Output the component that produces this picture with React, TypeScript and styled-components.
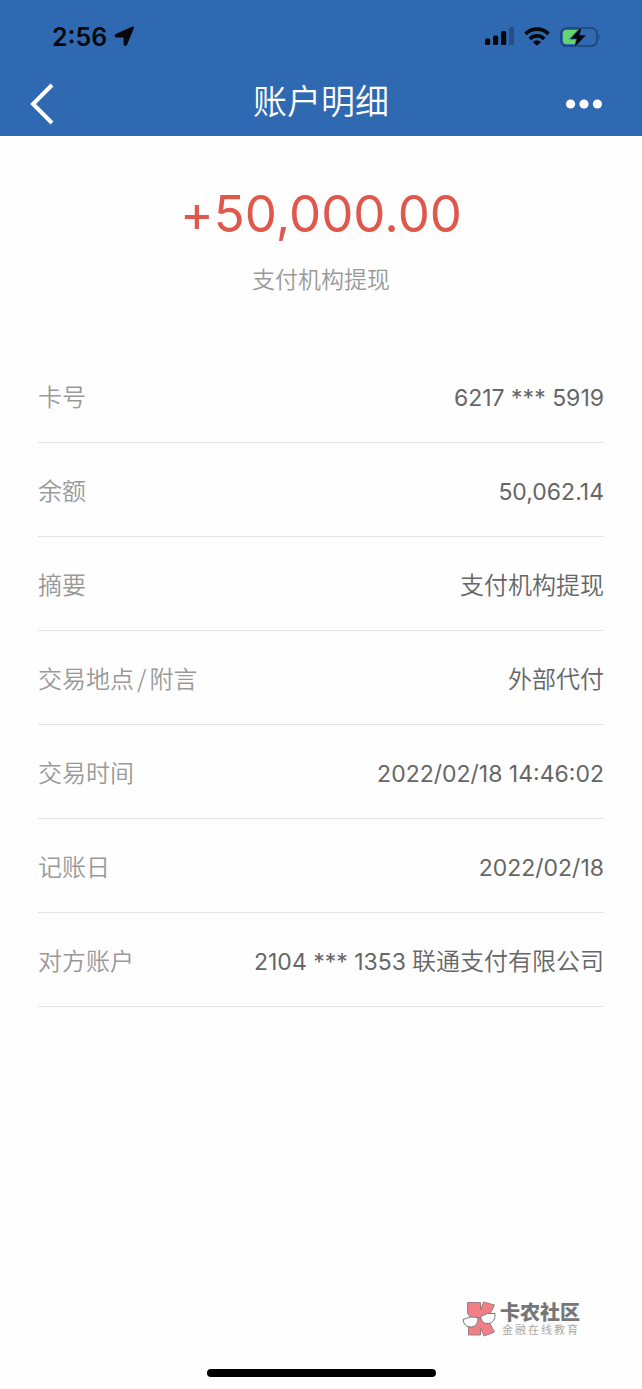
import React from "react";
import styled, { createGlobalStyle } from "styled-components";

const GlobalStyle = createGlobalStyle`
  * { box-sizing: border-box; }
  body {
    margin: 0;
    background: #fefefe;
    font-family: Inter, "Noto Sans CJK SC", sans-serif;
  }
`;

const Page = styled.div`
  min-height: 100vh;
  display: flex;
  flex-direction: column;
`;

const Header = styled.header`
  background: #2f69b1;
  padding-bottom: 1px;
`;

const StatusBar = styled.div`
  height: 73px;
  padding: 0 41px 0 52px;
  display: flex;
  align-items: center;
  justify-content: space-between;
  color: #06080d;
`;

const Clock = styled.div`
  display: flex;
  align-items: center;
  gap: 7px;
  font-size: 25px;
  font-weight: 600;
  line-height: 32px;
`;

const StatusIcons = styled.div`
  display: flex;
  align-items: center;
  gap: 10px;
`;

const NavBar = styled.nav`
  height: 62px;
  padding: 0 30px;
  display: grid;
  grid-template-columns: 48px 1fr 48px;
  align-items: center;
`;

const IconButton = styled.button<{ $end?: boolean }>`
  height: 48px;
  padding: 0 ${(p) => (p.$end ? "10px" : "0")} 0 0;
  border: 0;
  background: none;
  color: #fff;
  display: flex;
  align-items: center;
  justify-content: ${(p) => (p.$end ? "flex-end" : "flex-start")};
`;

const Title = styled.h1`
  margin: 0;
  color: #fff;
  font-size: 34px;
  font-weight: 350;
  line-height: 48px;
  padding-bottom: 4px;
  text-align: center;
`;

const Summary = styled.section`
  padding: 44px 38px 52px;
  text-align: center;
`;

const Amount = styled.div`
  color: #e0574c;
  font-size: 51px;
  font-feature-settings: "calt" 0;
  line-height: 68px;
`;

const Caption = styled.div`
  margin-top: 15px;
  color: #999;
  font-size: 23px;
  font-weight: 350;
  line-height: 34px;
`;

const Details = styled.dl`
  margin: 0 38px;
`;

const Row = styled.div`
  min-height: 94px;
  padding: 29px 0 20px;
  display: flex;
  align-items: baseline;
  justify-content: space-between;
  border-bottom: 1px solid #e4e4e4;
  font-size: 24px;
  line-height: 36px;
`;

const Term = styled.dt`
  color: #999;
  font-family: "Noto Sans CJK SC", sans-serif;
  font-weight: 350;
`;

const Slash = styled.span`
  margin: 0 3px;
`;

const Value = styled.dd`
  margin: 0;
  display: flex;
  align-items: baseline;
  gap: 6px;
  color: #666;
  font-weight: 350;
`;

const Digits = styled.span`
  font-size: 23px;
  font-weight: 400;
`;

const Footer = styled.footer`
  margin-top: auto;
  padding-bottom: 12px;
`;

const Brand = styled.div`
  display: flex;
  align-items: center;
  justify-content: flex-end;
  gap: 4px;
  padding-right: 62px;
  margin-bottom: 32px;
`;

const BrandText = styled.div`
  padding-top: 3px;
`;

const BrandName = styled.div`
  color: #777;
  font-size: 20px;
  font-weight: 900;
  line-height: 20px;
`;

const BrandTag = styled.div`
  color: #aaa;
  font-size: 11px;
  line-height: 14px;
  letter-spacing: 2px;
  padding-left: 2px;
`;

const HomeIndicator = styled.div`
  width: 229px;
  height: 8px;
  margin: 0 auto;
  border-radius: 4px;
  background: #000;
`;

type Detail = { label: string; digits?: string; text?: string };

const details: Detail[] = [
  { label: "卡号", digits: "6217 *** 5919" },
  { label: "余额", digits: "50,062.14" },
  { label: "摘要", text: "支付机构提现" },
  { label: "交易地点/附言", text: "外部代付" },
  { label: "交易时间", digits: "2022/02/18 14:46:02" },
  { label: "记账日", digits: "2022/02/18" },
  { label: "对方账户", digits: "2104 *** 1353", text: "联通支付有限公司" },
];

const LocationIcon = () => (
  <svg width="21" height="21" viewBox="0 0 21 21" aria-hidden="true">
    <path
      d="M19 1.500 12 18.500Q11 19.800 10.500 18V11.500L9.500 10.500H2.500Q.800 10 2 9Z"
      fill="currentColor"
      stroke="currentColor"
      strokeWidth="2"
      strokeLinejoin="round"
    />
  </svg>
);

const SignalIcon = () => (
  <svg width="29" height="19" viewBox="0 0 29 19" aria-hidden="true" fill="currentColor">
    <rect x="0" y="11.500" width="5.200" height="6.500" rx="1.500" />
    <rect x="8" y="8.500" width="5.200" height="9.500" rx="1.500" />
    <rect x="16" y="4" width="5.200" height="14" rx="1.500" />
    <rect x="24" y="0" width="5" height="18" rx="1.500" opacity=".25" />
  </svg>
);

const WifiIcon = () => (
  <svg width="26" height="19" viewBox="0 0 26 19" aria-hidden="true" fill="none" stroke="currentColor" strokeWidth="3.800">
    <path d="M1.500 6.800a16.500 16.500 0 0 1 23 0" />
    <path d="M5.800 11.800a10.300 10.300 0 0 1 14.400 0" />
    <path d="M13 18.800 8.900 14.900a5.800 5.800 0 0 1 8.200 0Z" fill="currentColor" stroke="none" />
  </svg>
);

const BatteryIcon = () => (
  <svg width="41" height="22" viewBox="0 0 41 22" aria-hidden="true">
    <rect x="1" y="2" width="36" height="18" rx="5.500" fill="none" stroke="#1d4375" strokeWidth="1.600" />
    <path d="M38.800 8q2 3 0 6Z" fill="#1d4375" />
    <path d="M6.500 4H18v14H6.500Q3 18 3 14.500v-7Q3 4 6.500 4Z" fill="#65d56c" />
    <path
      d="M21.800 .8 10.600 12.700h6.400L14.500 21.200 25.800 9.300h-6.400Z"
      fill="#06080d"
      stroke="#2f69b1"
      strokeWidth="1.600"
      paintOrder="stroke"
    />
  </svg>
);

const BackIcon = () => (
  <svg width="24" height="42" viewBox="0 0 24 42" aria-hidden="true">
    <path d="M22 2 3 21l19 19" fill="none" stroke="currentColor" strokeWidth="4" />
  </svg>
);

const MoreIcon = () => (
  <svg width="36" height="10" viewBox="0 0 36 10" aria-hidden="true" fill="currentColor">
    <circle cx="4.600" cy="5" r="4.600" />
    <circle cx="18" cy="5" r="4.600" />
    <circle cx="31.400" cy="5" r="4.600" />
  </svg>
);

const BrandLogo = () => (
  <svg width="34" height="36" viewBox="0 0 34 36" aria-hidden="true" strokeLinejoin="round">
    <path
      d="M5.500 1.500H18.500V9L21.500 1 32.500 4 25.500 18 32.500 31 22 35 18.500 27V34H6.500V25L8 16 5.500 12Z"
      fill="#f17f86"
      stroke="#9a8083"
    />
    <path d="M1 18.500Q8 14.500 16 16.500 16.500 25 9.500 26 2 26.500 1 18.500Z" fill="#fff" stroke="#777" />
    <path d="M18.500 15.500Q25 11 33 12.500 33.500 21 27 22.500 19.500 23.500 18.500 15.500Z" fill="#fff" stroke="#777" />
    <path d="M16 17.500 18.500 16.500" stroke="#777" />
  </svg>
);

const Label = ({ text }: { text: string }) => {
  const [first, second] = text.split("/");
  return (
    <Term>
      {first}
      {second && (
        <>
          <Slash>/</Slash>
          {second}
        </>
      )}
    </Term>
  );
};

export default function App() {
  return (
    <Page>
      <GlobalStyle />
      <Header>
        <StatusBar>
          <Clock>
            2:56
            <LocationIcon />
          </Clock>
          <StatusIcons>
            <SignalIcon />
            <WifiIcon />
            <BatteryIcon />
          </StatusIcons>
        </StatusBar>
        <NavBar>
          <IconButton aria-label="返回">
            <BackIcon />
          </IconButton>
          <Title>账户明细</Title>
          <IconButton $end aria-label="更多">
            <MoreIcon />
          </IconButton>
        </NavBar>
      </Header>
      <main>
        <Summary>
          <Amount>+50,000.00</Amount>
          <Caption>支付机构提现</Caption>
        </Summary>
        <Details>
          {details.map(({ label, digits, text }) => (
            <Row key={label}>
              <Label text={label} />
              <Value>
                {digits && <Digits>{digits}</Digits>}
                {text && <span>{text}</span>}
              </Value>
            </Row>
          ))}
        </Details>
      </main>
      <Footer>
        <Brand>
          <BrandLogo />
          <BrandText>
            <BrandName>卡农社区</BrandName>
            <BrandTag>金融在线教育</BrandTag>
          </BrandText>
        </Brand>
        <HomeIndicator />
      </Footer>
    </Page>
  );
}
